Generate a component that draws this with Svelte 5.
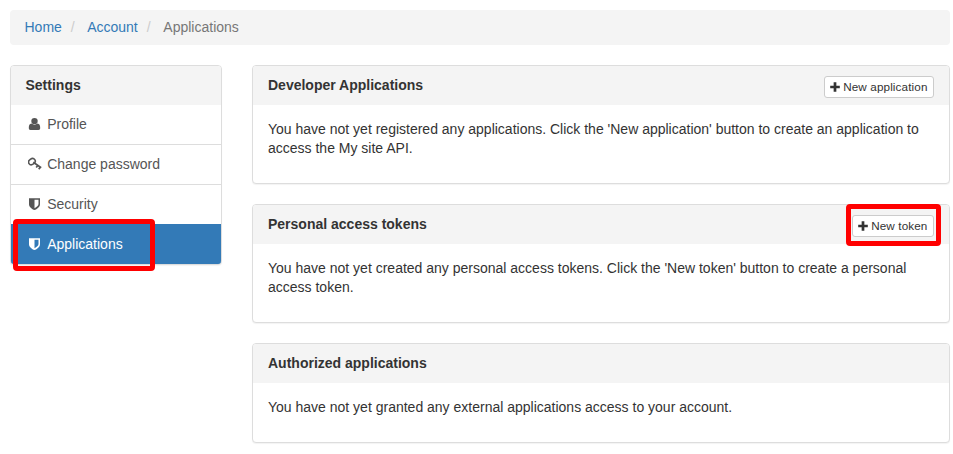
<script>
  const nav = [
    { label: 'Profile', icon: 'user' },
    { label: 'Change password', icon: 'key' },
    { label: 'Security', icon: 'shield' },
    { label: 'Applications', icon: 'shield', active: true }
  ];
  const panels = [
    { title: 'Developer Applications', button: 'New application', text: "You have not yet registered any applications. Click the 'New application' button to create an application to access the My site API." },
    { title: 'Personal access tokens', button: 'New token', marked: true, text: "You have not yet created any personal access tokens. Click the 'New token' button to create a personal access token." },
    { title: 'Authorized applications', text: 'You have not yet granted any external applications access to your account.' }
  ];
</script>

<div class="page">
  <nav class="crumbs">
    <a href="#home">Home</a><i>/</i><a href="#account">Account</a><i>/</i><span>Applications</span>
  </nav>
  <div class="cols">
    <aside class="panel side">
      <header>Settings</header>
      {#each nav as n}
        <a class="item" class:active={n.active} href="#{n.label}">
          <svg width="14" height="14" viewBox="0 0 14 14" fill="currentColor">
            {#if n.icon === 'user'}
              <path d="M2.500 13C1.300 13 .8 12.200 .8 11 .8 8.600 1.500 6.700 3.500 6.600 4.500 7.300 5.500 7.700 6.500 7.700S8.500 7.300 9.500 6.600C11.500 6.700 12.200 8.600 12.200 11 12.200 12.200 11.700 13 10.500 13Z" />
              <circle cx="6.500" cy="4.100" r="3.200" />
            {:else if n.icon === 'key'}
              <g fill="none" stroke="currentColor">
                <ellipse cx="3.900" cy="4.600" rx="3.500" ry="2.800" stroke-width="1.600" transform="rotate(-35 3.900 4.600)" />
                <path stroke-width="1.700" d="M5.300 5.300 13.200 10.700M9.800 8.400 8.200 10.600M12.100 10.100 10.800 12.200" />
              </g>
            {:else}
              <path fill-rule="evenodd" d="M1 1.200h11v6c0 2.900-2.900 4.700-5.500 5.900-2.600-1.200-5.500-3-5.500-5.900ZM6.500 2.700v8.600C8.600 10.200 10.500 8.900 10.500 7.100V2.700Z" />
            {/if}
          </svg>{n.label}
        </a>
      {/each}
      <div class="mark nav-mark"></div>
    </aside>
    <main>
      {#each panels as p}
        <section class="panel">
          <header>{p.title}
            {#if p.button}
              <button><svg width="10" height="10" viewBox="0 0 10 10"><path d="M5 .2V9.800M.2 5H9.800" stroke="currentColor" stroke-width="2.700" /></svg><span>{p.button}</span></button>
            {/if}
          </header>
          <div class="body"><p>{p.text}</p></div>
          {#if p.marked}<div class="mark token-mark"></div>{/if}
        </section>
      {/each}
    </main>
  </div>
</div>

<style>
  :global(body) { background: #fff; }
  .page { box-sizing: border-box; width: 953px; height: 454px; overflow: hidden; padding: 10px 3px 0 10px; font: 14px/19px "Liberation Sans", Arial, sans-serif; color: #333; }
  .crumbs { display: flex; box-sizing: border-box; height: 35px; padding: 8px 14.5px; background: #f4f4f4; border-radius: 4px; margin-bottom: 20px; }
  a { color: #337ab7; text-decoration: none; }
  i { font-style: normal; color: #ccc; width: 25.3px; padding-left: 9px; box-sizing: border-box; }
  .crumbs span { color: #777; margin-left: .3px; }
  .cols { display: flex; gap: 30px; align-items: flex-start; }
  .panel { position: relative; box-sizing: border-box; border: 1px solid #ddd; border-radius: 4px; box-shadow: 0 1px 1px rgba(0,0,0,.05); background: #fff; }
  .side { width: 212px; height: 200px; }
  .side header { padding-left: 14.5px; }
  header { box-sizing: border-box; height: 39px; padding: 10px 15px; background: #f4f4f4; font-weight: bold; display: flex; justify-content: space-between; border-radius: 3px 3px 0 0; }
  .item { display: flex; align-items: center; box-sizing: border-box; height: 40px; padding: 0 16px 1px 17px; border-bottom: 1px solid #ddd; color: #555; }
  .item svg { margin-right: 5.2px; }
  .item.active { margin-top: -1px; padding-top: 1px; padding-bottom: 0; background: #337ab7; border-color: #337ab7; color: #fff; border-radius: 0 0 3px 3px; }
  main { width: 698px; }
  main .panel { height: 119px; margin-bottom: 20px; }
  main .panel:last-child { height: 100px; }
  .body { padding: 15px; }
  p { margin: 0; }
  button { display: flex; align-items: center; gap: 3px; box-sizing: border-box; height: 22px; padding: 0 5.500px 0 5px; border: 1px solid #ccc; border-radius: 3px; background: #fff; color: #333; font: 11.7px/18px "Liberation Sans", Arial, sans-serif; letter-spacing: .12px; white-space: nowrap; }
  .mark { position: absolute; box-sizing: border-box; border: 5px solid #f00; border-radius: 4px; }
  .nav-mark { left: 2px; top: 152.500px; width: 142px; height: 52px; }
  .token-mark { left: 593px; top: -1px; width: 95px; height: 42px; }
</style>
